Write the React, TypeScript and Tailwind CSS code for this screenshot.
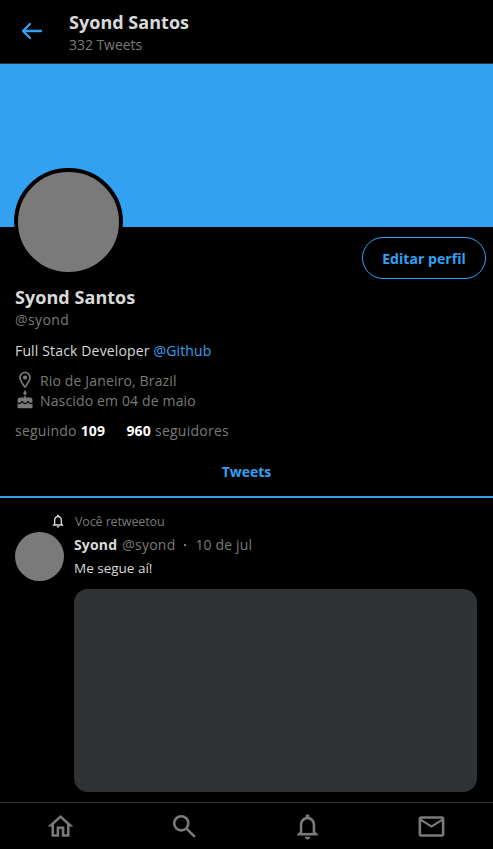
import type { ReactNode } from "react";
import {
  MdCake,
  MdNotificationsNone,
  MdOutlineEmail,
  MdOutlineHome,
  MdOutlineLocationOn,
} from "react-icons/md";

function BackIcon() {
  return (
    <svg
      className="size-6 shrink-0"
      viewBox="0 0 24 24"
      fill="none"
      stroke="currentColor"
      strokeWidth="2.3"
      strokeLinecap="round"
      strokeLinejoin="round"
    >
      <path d="M10 19l-7-7m0 0l7-7m-7 7h18" />
    </svg>
  );
}

function SearchIcon() {
  return (
    <svg className="size-[31px]" viewBox="0 0 24 24" fill="none" stroke="currentColor" strokeWidth="2">
      <circle cx="9.5" cy="9.5" r="5.5" />
      <path d="M13.4 13.4L20 20" />
    </svg>
  );
}

function Header() {
  return (
    <header className="flex h-16 shrink-0 border-b border-[#2f3336] pl-5 pt-[11px]">
      <button className="mt-2 h-6 text-[#33a1f2]">
        <BackIcon />
      </button>
      <div className="ml-[25px]">
        <h1 className="text-[18px] font-bold leading-[23px] tracking-[0.03px]">Syond Santos</h1>
        <p className="text-[14px] leading-[21px] tracking-[-0.05px] text-[#7a7a7a]">332 Tweets</p>
      </div>
    </header>
  );
}

function InfoRow({ icon, children }: { icon: ReactNode; children: ReactNode }) {
  return (
    <li className="flex h-5 items-center gap-[5px]">
      {icon}
      <span>{children}</span>
    </li>
  );
}

function Profile() {
  return (
    <section className="shrink-0">
      <div className="h-[163px] bg-[#33a1f2]" />
      <div className="flex h-[59px] items-start justify-between pl-3.5 pr-[7px]">
        <div className="-mt-[59px] h-[108px] w-[109px] rounded-full border-4 border-black bg-[#7a7a7a]" />
        <button className="mt-2.5 h-[42px] w-[124px] rounded-full border border-[#33a1f2] text-[14px] font-bold tracking-[0.05px] text-[#33a1f2]">
          Editar perfil
        </button>
      </div>
      <div className="px-[15px] text-[14px] tracking-[0.15px]">
        <h2 className="text-[18px] font-bold leading-[23px] tracking-[0.05px]">Syond Santos</h2>
        <p className="leading-[22px] tracking-[0.4px] text-[#7a7a7a]">@syond</p>
        <p className="mt-2.5 leading-5">
          Full Stack Developer <a className="text-[#33a1f2]">@Github</a>
        </p>
        <ul className="mt-[9px] text-[#7a7a7a]">
          <InfoRow icon={<MdOutlineLocationOn className="size-5" />}>Rio de Janeiro, Brazil</InfoRow>
          <InfoRow icon={<MdCake className="size-5" />}>Nascido em 04 de maio</InfoRow>
        </ul>
        <div className="mt-[11px] flex gap-[21px] leading-5 tracking-[0.24px] text-[#7a7a7a]">
          <span>
            seguindo <strong className="text-white">109</strong>
          </span>
          <span>
            <strong className="text-white">960</strong> seguidores
          </span>
        </div>
      </div>
    </section>
  );
}

function Tweet() {
  return (
    <article className="pl-[15px] pr-4 pt-[14px]">
      <div className="flex h-5 items-center pl-[35px] text-[12.5px]">
        <MdNotificationsNone className="mb-0.5 size-[16px] text-[#d9d9d9]" />
        <span className="ml-[9px] tracking-[-0.12px] text-[#7a7a7a]">Você retweetou</span>
      </div>
      <div className="flex gap-2.5">
        <div className="size-[49px] shrink-0 rounded-full bg-[#7a7a7a]" />
        <div className="flex-1 pt-[3px]">
          <div className="flex items-center text-[14px] leading-5 tracking-[0.15px] text-[#7a7a7a]">
            <strong className="text-[#d9d9d9]">Syond</strong>
            <span className="ml-[5px] tracking-[0.25px]">@syond</span>
            <span className="mx-[9px] size-0.5 bg-[#7a7a7a]" />
            <time>10 de jul</time>
          </div>
          <p className="mt-1 text-[13.5px] leading-[18px]">Me segue aí!</p>
          <div className="mt-3 h-[203px] rounded-[14px] bg-[#2f3336]" />
        </div>
      </div>
    </article>
  );
}

function BottomMenu() {
  return (
    <nav className="flex h-[47px] shrink-0 items-start justify-between border-t border-[#2f3336] pl-[45px] pr-[46px] pt-2 text-[#7a7a7a]">
      <MdOutlineHome className="size-[31px]" />
      <SearchIcon />
      <MdNotificationsNone className="size-[31px]" />
      <MdOutlineEmail className="size-[31px]" />
    </nav>
  );
}

export default function App() {
  return (
    <main className="flex h-[849px] w-full flex-col overflow-hidden bg-black font-['Open_Sans','Noto_Sans',sans-serif] text-[#d9d9d9]">
      <Header />
      <Profile />
      <div className="flex h-[57px] shrink-0 items-center justify-center border-b-2 border-[#33a1f2] pt-1.5 text-[14px] font-bold text-[#33a1f2]">
        Tweets
      </div>
      <div className="min-h-0 flex-1">
        <Tweet />
      </div>
      <BottomMenu />
    </main>
  );
}
